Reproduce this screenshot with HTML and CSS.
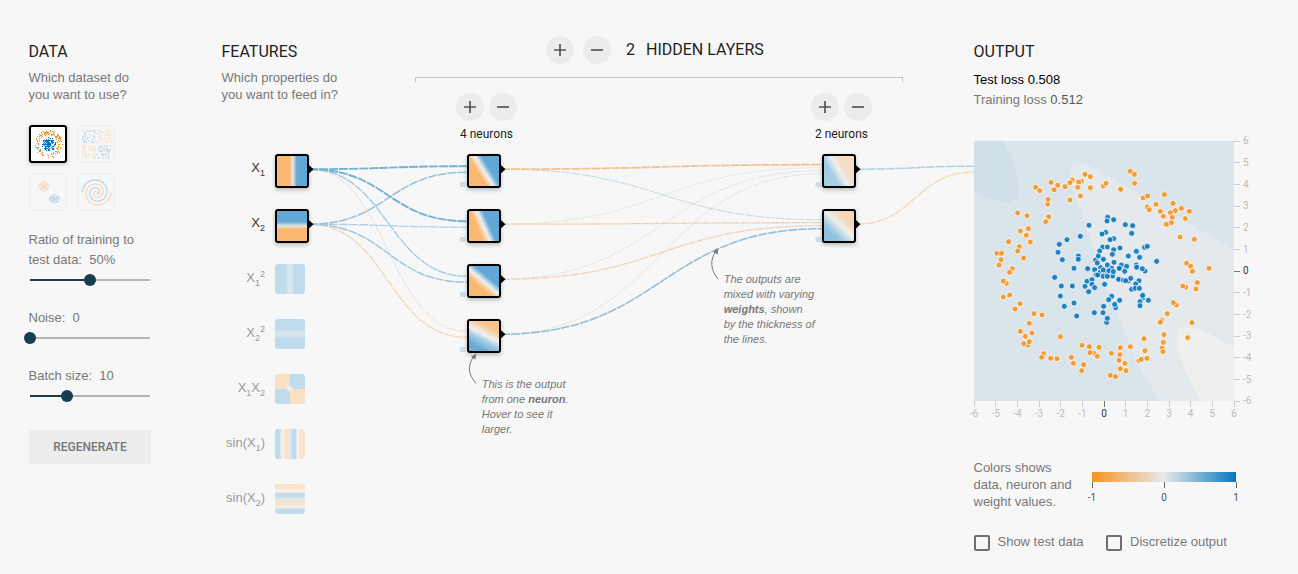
FILE: index.html
```html
<!DOCTYPE html>
<html lang="en">
<head>
<meta charset="utf-8">
<title>Neural network playground</title>
<link rel="stylesheet" href="styles.css">
</head>
<body>
<main class="page">
  <svg class="links" id="links" viewBox="0 0 1298 574"></svg>

  <section class="data">
    <h2>DATA</h2>
    <p class="intro">Which dataset do<br>you want to use?</p>
    <div class="datasets">
      <svg class="dataset selected" id="circle" viewBox="0 0 34 34"></svg>
      <svg class="dataset" id="xor" viewBox="0 0 34 34"></svg>
      <svg class="dataset" id="gauss" viewBox="0 0 34 34"></svg>
      <svg class="dataset" id="spiral" viewBox="0 0 34 34"></svg>
    </div>
    <div class="control ratio"><label>Ratio of training to<br>test data:&nbsp; 50%</label><div class="slider"><div class="fill" style="width:60px"></div></div></div>
    <div class="control"><label>Noise:&nbsp; 0</label><div class="slider"><div class="fill" style="width:0px"></div></div></div>
    <div class="control"><label>Batch size:&nbsp; 10</label><div class="slider"><div class="fill" style="width:37px"></div></div></div>
    <button class="regenerate">REGENERATE</button>
  </section>

  <section class="features">
    <h2>FEATURES</h2>
    <p class="intro">Which properties do<br>you want to feed in?</p>
    <div class="feature-list">
      <div class="feature on"><span>X<sub>1</sub></span><i class="tile node x1"></i></div>
      <div class="feature on"><span>X<sub>2</sub></span><i class="tile node x2"></i></div>
      <div class="feature"><span>X<sub>1</sub><sup>2</sup></span><i class="tile x1sq"></i></div>
      <div class="feature"><span>X<sub>2</sub><sup>2</sup></span><i class="tile x2sq"></i></div>
      <div class="feature"><span>X<sub>1</sub>X<sub>2</sub></span><i class="tile x1x2"></i></div>
      <div class="feature"><span>sin(X<sub>1</sub>)</span><i class="tile sin1"></i></div>
      <div class="feature"><span>sin(X<sub>2</sub>)</span><i class="tile sin2"></i></div>
    </div>
  </section>

  <section class="hidden-layers">
    <header class="layer-header">
      <button class="round"><svg viewBox="0 0 28 28"><path d="M8 14H20M14 8V20"/></svg></button>
      <button class="round"><svg viewBox="0 0 28 28"><path d="M8 14H20"/></svg></button>
      <span class="count">2</span><span>HIDDEN LAYERS</span>
    </header>
    <div class="bracket"></div>
    <div class="layers">
      <div class="layer">
        <div class="layer-buttons">
          <button class="round"><svg viewBox="0 0 28 28"><path d="M8 14H20M14 8V20"/></svg></button>
          <button class="round"><svg viewBox="0 0 28 28"><path d="M8 14H20"/></svg></button>
        </div>
        <div class="neuron-count">4 neurons</div>
        <div class="neurons">
          <i class="tile node h1"></i><i class="tile node h2"></i><i class="tile node h3"></i><i class="tile node h4"></i>
        </div>
      </div>
      <div class="layer">
        <div class="layer-buttons">
          <button class="round"><svg viewBox="0 0 28 28"><path d="M8 14H20M14 8V20"/></svg></button>
          <button class="round"><svg viewBox="0 0 28 28"><path d="M8 14H20"/></svg></button>
        </div>
        <div class="neuron-count">2 neurons</div>
        <div class="neurons">
          <i class="tile node o1"></i><i class="tile node o2"></i>
        </div>
      </div>
    </div>
    <div class="callout callout-neuron">This is the output<br>from one <b>neuron</b>.<br>Hover to see it<br>larger.</div>
    <div class="callout callout-weights">The outputs are<br>mixed with varying<br><b>weights</b>, shown<br>by the thickness of<br>the lines.</div>
  </section>

  <section class="output">
    <h2>OUTPUT</h2>
    <div class="loss test">Test loss <span>0.508</span></div>
    <div class="loss">Training loss <span>0.512</span></div>
    <svg class="heatmap" id="heatmap" viewBox="0 0 300 290">
      <rect width="260" height="260" fill="#dae5eb"/>
      <path fill="#d1dfe9" d="M0 0H29.3L37.7 15.7L42.7 34L45.3 49L43.7 57L35.3 62.5L22.7 60L9.3 55.7L0 50Z"/>
      <path fill="#e4e9ed" d="M97 25.7L99.3 21.7L109 22L126 30L159.3 49L192.7 70.7L226 89L260 109.7V260H185.3L164.3 224L144.3 175.7L132 147L121 112L97.7 42Z"/>
      <path fill="#eff0ee" d="M203.3 209V190.7L206 187.3L216 186.3L229.3 189.7L260 206.3V260H227L211 229Z"/>
      <g id="axes"></g>
      <g id="points"></g>
    </svg>
    <div class="legend">
      <p>Colors shows<br>data, neuron and<br>weight values.</p>
      <div class="scale">
        <div class="gradient"></div>
        <div class="marks"><span>-1</span><span>0</span><span>1</span></div>
      </div>
    </div>
    <div class="checks">
      <label><i class="box"></i>Show test data</label>
      <label><i class="box"></i>Discretize output</label>
    </div>
  </section>
</main>
<script src="app.js"></script>
</body>
</html>
```

FILE: styles.css
```css
* { box-sizing: border-box; }

body {
  margin: 0;
  background: #f7f7f7;
  color: #777;
  font: 13px/17px "Liberation Sans", Arial, sans-serif;
}

.page {
  position: relative;
  display: grid;
  grid-template-columns: 193px 194px 558px 1fr;
  width: 1298px;
  height: 574px;
  padding-left: 28.5px;
  overflow: hidden;
}

.links { position: absolute; left: 0; top: 0; width: 1298px; height: 574px; fill: none; }
.links .head { fill: #000; }
.links .bias { fill: #cfdfe9; }
.links .pointer { stroke: #777; stroke-width: 1; }
.links .pointer-head { fill: #777; }
.links path.link { stroke-dasharray: 9 1; }

h2 {
  margin: 0;
  padding-top: 42px;
  color: #1e1e1e;
  font: 400 16px/19px Roboto, sans-serif;
}

.intro { margin: 8px 0 0; }

/* Data column */
.datasets {
  display: grid;
  grid-template-columns: 38px 38px;
  gap: 10px;
  margin: 22px 0 0 .5px;
}
.dataset {
  width: 38px;
  height: 38px;
  border: 2px solid #f1f1f1;
  border-radius: 3px;
}
.dataset.selected {
  border-color: #000;
  background: #fff;
  box-shadow: 0 1px 4px rgba(0, 0, 0, .25);
}

.control { height: 58px; }
.control label { display: block; line-height: 20px; }
.control.ratio { height: 78px; margin-top: 19px; }
.slider {
  width: 120px;
  height: 2px;
  margin: 9px 0 0 1.5px;
  background: #b5b5b5;
}
.fill { position: relative; height: 2px; background: #183d4e; }
.fill::after {
  content: "";
  position: absolute;
  right: -6px;
  top: -5px;
  width: 12px;
  height: 12px;
  border-radius: 50%;
  background: #183d4e;
}
.regenerate {
  display: block;
  width: 122px;
  height: 34px;
  margin: 6px 0 0 .5px;
  padding: 0;
  border: 0;
  border-radius: 2px;
  background: #ededed;
  color: #757575;
  font: 500 12px/34px Roboto, sans-serif;
}

/* Tiles and nodes */
.tile {
  position: relative;
  display: block;
  width: 30px;
  height: 30px;
  border-radius: 3px;
}
.node {
  width: 34px;
  height: 34px;
  border: 2px solid #000;
  background-clip: padding-box;
  background-origin: padding-box;
  box-shadow: 0 2px 4px rgba(0, 0, 0, .25);
}
.x1 { background-image: linear-gradient(90deg, #fab971 41%, #e8e6e0 53%, #62a8d6 66%); }
.x2 { background-image: linear-gradient(180deg, #62a8d6 36%, #e8e6e0 50%, #fab971 60%); }
.x1sq { background: linear-gradient(90deg, #bfdbec 36%, #d7e5ef 43%, #d7e5ef 57%, #bfdbec 63%); }
.x2sq { background: linear-gradient(180deg, #bfdbec 36%, #d7e5ef 43%, #d7e5ef 57%, #bfdbec 63%); }
.x1x2 {
  background:
    radial-gradient(circle at 50% 50%, #edf0f0 0, #edf0f0 6%, transparent 19%),
    conic-gradient(#bfdbec 25%, #fae0c3 0 50%, #bfdbec 0 75%, #fae0c3 0);
}
.sin1 { background: linear-gradient(90deg, #bfdbec 14%, #f4f2ef 24%, #fae2cb 34%, #fae2cb 42%, #dde8ef 50%, #bfdbec 61%, #bfdbec 69%, #f7f5f2 75%, #fae2cb 84%); }
.sin2 { background: linear-gradient(180deg, #fae2cb 14%, #f7f5f2 25%, #bfdbec 33%, #bfdbec 40%, #dde8ef 50%, #fae2cb 60%, #fae2cb 70%, #f7f5f2 77%, #c3dcec 84%); }
.h1 { background-image: linear-gradient(58deg, #fab971 36%, #eef0f1 50%, #62a8d6 64%); }
.h2 { background-image: linear-gradient(66deg, #fab971 34%, #eef0f1 49%, #62a8d6 63%); }
.h3 { background-image: linear-gradient(40deg, #fab971 34%, #eef0f1 49%, #62a8d6 63%); }
.h4 { background-image: linear-gradient(28deg, #68acd6 20%, #a8cde4 40%, #eef0f1 53%, #fac58b 76%); }
.o1 { background-image: linear-gradient(60deg, #a5cce3 32%, #eef0f1 51%, #f3dfc9 61%); }
.o2 { background-image: linear-gradient(43deg, #8fc1e0 25%, #b3d2e5 37%, #eef0f1 53%, #f6d6b4 72%); }

/* Features column */
.feature-list { margin-top: 51px; }
.feature {
  display: flex;
  gap: 10px;
  height: 55px;
  color: #999;
}
.feature.on { color: #333; }
.feature span { width: 43.5px; text-align: right; line-height: 28px; white-space: nowrap; }
.feature sub, .feature sup { font-size: 9px; line-height: 0; }
.feature sub { vertical-align: -4px; }
.feature sup { vertical-align: 5px; }

/* Hidden layers */
.hidden-layers { position: relative; color: #1e1e1e; }
.layer-header {
  display: flex;
  gap: 9px;
  align-items: center;
  height: 28px;
  margin: 36px 0 0 130.5px;
  font: 400 16px/28px Roboto, sans-serif;
}
.count { margin: 0 2px 0 6px; }
.round {
  width: 28px;
  height: 28px;
  padding: 0;
  border: 0;
  border-radius: 50%;
  background: #ececec;
}
.round svg { display: block; width: 28px; height: 28px; stroke: #555; stroke-width: 1.7; }
.bracket {
  width: 488px;
  height: 5px;
  margin: 13px 0 0 -.5px;
  border: solid #c4c4c4;
  border-width: 1px 1px 0;
}
.layers { display: flex; gap: 294px; padding: 11px 0 0 40.5px; }
.layer { width: 61px; }
.layer-buttons { display: flex; gap: 5px; }
.neuron-count { margin-top: 5px; text-align: center; font: 12px/17px Roboto, sans-serif; white-space: nowrap; }
.neurons { display: grid; gap: 21px; margin: 11px 0 0 11px; }
.callout { position: absolute; color: #777; font-size: 11px; line-height: 15px; font-style: italic; white-space: nowrap; }
.callout-neuron { left: 66.2px; top: 377px; }
.callout-weights { left: 308.2px; top: 272px; }

/* Output column */
.output { position: relative; }
.loss { line-height: 20px; }
.loss span { color: #555; }
.loss.test, .loss.test span { color: #000; }
.loss.test { margin-top: 9px; }
.heatmap { display: block; width: 300px; height: 290px; margin: 31px 0 0 .5px; overflow: visible; }
.heatmap text { font: 10px Roboto, sans-serif; fill: #bbb; }
.heatmap text.zero { fill: #333; }
.legend { display: flex; margin-top: 28px; }
.legend p { width: 118.5px; margin: 0; }
.scale { width: 144px; padding-top: 13px; }
.gradient { height: 10px; background: linear-gradient(90deg, #f59322, #e8eaeb 50%, #0877bd); }
.marks { display: flex; justify-content: space-between; margin: 0 -10px; font: 10px/12px Roboto, sans-serif; color: #555; }
.marks span { width: 20px; text-align: center; }
.marks span::before { content: ""; display: block; width: 1px; height: 6px; margin: 0 auto 4px; background: #666; }
.checks { display: flex; gap: 22.8px; margin: 23px 0 0 .2px; line-height: 18px; }
.checks label { display: flex; gap: 7.8px; }
.box { width: 16px; height: 16px; margin-top: 2px; border: 2px solid #707070; border-radius: 2px; }
```

FILE: app.js
```javascript
const NS = "http://www.w3.org/2000/svg";
const BLUE = "#0877bd";
const ORANGE = "#f59322";

function add(parent, name, attrs, text) {
  const el = document.createElementNS(NS, name);
  for (const key in attrs) el.setAttribute(key, attrs[key]);
  if (text !== undefined) el.textContent = text;
  parent.appendChild(el);
  return el;
}

/* Weighted links: [x1, y1, x2, y2, width, colour] */
const links = document.getElementById("links");
const rows = [169.2, 224.2, 279.2, 334.2];
const weights = [
  [309, rows[0], 467, rows[3] - 3, 1, "#f0dfcb"],
  [309, rows[1], 467, rows[3] + 3, 1.2, "#f0d4b2"],
  [309, rows[0], 467, rows[2] - 3, 1.3, "#9fc9e2"],
  [309, rows[1], 467, rows[2] + 3, 1.4, "#97c4e0"],
  [309, rows[1], 467, rows[1] + 3, 1.3, "#b0d1e4"],
  [309, rows[1], 467, rows[0] + 3, 1.5, "#93c1de"],
  [309, rows[0], 467, rows[1] - 3, 1.9, "#76b1d8"],
  [309, rows[0], 467, rows[0] - 3, 1.9, "#76b1d8"],
  [501, rows[1], 822, rows[0] - 1.5, .8, "#e2e3e0"],
  [501, rows[2], 822, rows[0] + 1.5, .9, "#e3e1db"],
  [501, rows[3], 822, rows[0] + 4.5, .9, "#e6e1d6"],
  [501, rows[0], 822, rows[1] - 4.5, 1.1, "#cbdce7"],
  [501, rows[1], 822, rows[1] - 1.5, 1.3, "#f0d1ad"],
  [501, rows[2], 822, rows[1] + 1.5, 1.3, "#f0d4b4"],
  [501, rows[3], 822, rows[1] + 4.5, 1.6, "#91bfde"],
  [501, rows[0], 822, rows[0] - 4.5, 1.8, "#f3c38e"],
  [856, rows[0], 974, 166.2, 1.5, "#aed0e5"],
  [856, rows[1], 974, 172.2, 1.3, "#f0d7bb"]
];
for (const [x1, y1, x2, y2, width, stroke] of weights) {
  const mid = (x1 + x2) / 2;
  add(links, "path", { class: "link", stroke, "stroke-width": width,
    d: `M${x1} ${y1}C${mid} ${y1} ${mid} ${y2} ${x2} ${y2}` });
}
const outlets = [[309, 0], [309, 1], [501, 0], [501, 1], [501, 2], [501, 3], [856, 0], [856, 1]];
for (const [x, r] of outlets) {
  add(links, "path", { class: "head", d: `M${x - 1} ${rows[r] - 5}L${x + 4.5} ${rows[r]}L${x - 1} ${rows[r] + 5}Z` });
  if (x > 309) add(links, "rect", { class: "bias", x: x === 501 ? 460 : 815.5, y: 182 + r * 55, width: 5.5, height: 5 });
}
add(links, "path", { class: "pointer", d: "M476 383.5C468 374 467 366 474 356" });
add(links, "path", { class: "pointer-head", d: "M476 354L475.5 359.5L471 356.8Z" });
add(links, "path", { class: "pointer", d: "M718 279C710 269 710 260 716 251" });
add(links, "path", { class: "pointer-head", d: "M718 248L717.8 254.5L713.3 251.8Z" });

/* Axes, six units either side of zero */
const axes = document.getElementById("axes");
for (let v = -6; v <= 6; v++) {
  const p = (v + 6) * 260 / 12;
  const tick = v === 0 ? "#777" : "#ccc";
  const cls = v === 0 ? "zero" : "";
  add(axes, "path", { stroke: tick, d: `M${Math.floor(p) + .5} 260V266M260 ${Math.floor(260 - p) + .5}H266` });
  add(axes, "text", { class: cls, x: p, y: 276, "text-anchor": "middle" }, v);
  add(axes, "text", { class: cls, x: 269, y: 263.3 - p }, v);
}

/* Samples per quadrant, in thirds of a pixel from the quadrant's origin */
const quadrants = [
  { x: -4, y: -6,
    orange: [345,118,361,125,307,135,334,138,326,141,300,143,243,142,263,151,252,164,285,155,197,157,209,167,323,157,361,158,400,153,408,145,450,163,331,183,300,195,233,207,234,193,143,234,171,242,236,245,227,260,175,281,151,288,169,301,181,321,116,320,148,335,143,348,161,369,81,355,95,355,93,374,87,390,127,401,119,412,109,445,100,438],
    blue: [413,247,411,258,431,254,357,271,407,292,396,297,331,304,291,314,431,311,420,314,268,328,264,352,277,374,325,363,325,373,312,400,254,427,398,336,412,336,389,348,431,344,427,358,377,375,385,363,400,373,382,384,353,401,432,382,412,390,392,398,425,400,390,412,408,414,374,404,400,405,417,407,378,419,383,420,400,424,428,423,412,424,430,410,351,439,366,434,366,448,404,448,447,433,448,400] },
  { x: 126, y: -6,
    orange: [91,109,103,118,104,145,62,163,129,189,143,183,193,179,142,216,148,224,168,208,219,205,181,229,190,244,226,227,211,233,244,220,268,229,217,247,214,263,199,268,256,251,240,306,283,313,260,385,272,394,277,409,327,400,292,443],
    blue: [60,339,76,269,98,272,95,295,134,337,142,334,109,349,85,363,119,367,170,379,109,390,110,397,135,408,127,401,64,390,80,394,58,400,74,409,85,438,92,430,117,437,56,433,70,436,77,437,107,447] },
  { x: -4, y: 129,
    orange: [119,75,100,81,150,101,135,117,192,131,216,135,178,160,151,184,186,189,166,199,174,225,178,215,161,221,221,251,215,262,242,265,261,266,271,200,304,262,310,280,341,284,335,302,336,226,358,230,387,232,372,250,360,248,382,259,424,250,421,316,436,320],
    blue: [274,48,307,48,271,78,312,99,283,109,320,138,345,49,374,53,356,65,373,128,399,128,401,109,425,79,416,89,437,113,434,103,449,91,410,157,412,145] },
  { x: 126, y: 129,
    orange: [257,52,248,48,288,57,229,105,220,98,202,131,185,151,181,157,276,158,263,203,192,194,190,217,186,235,189,245,132,206,135,242,91,230,61,233,60,254,57,271,75,280,61,296,78,302,117,272,124,268,141,265],
    blue: [95,58,106,55,118,55,128,84,128,76,145,91,120,95,120,107] }
];
const points = document.getElementById("points");
for (const q of quadrants) {
  for (const kind of ["orange", "blue"]) {
    for (let i = 0; i < q[kind].length; i += 2) {
      add(points, "circle", { cx: q[kind][i] / 3 + q.x, cy: q[kind][i + 1] / 3 + q.y, r: 3,
        fill: kind === "orange" ? ORANGE : BLUE, "fill-opacity": .9, stroke: "#fff", "stroke-width": .8 });
    }
  }
}

/* Dataset thumbnails */
let seed = 7;
function random() {
  seed = (seed * 16807) % 2147483647;
  return seed / 2147483647;
}
function pixel(id, x, y, fill) {
  add(document.getElementById(id), "rect", { x: Math.round(x), y: Math.round(y), width: 1.1, height: 1.1, fill });
}
const PALE_BLUE = "#c5dcea";
const PALE_ORANGE = "#f7e0c9";
for (let i = 0; i < 135; i++) {
  const a = random() * Math.PI * 2;
  const r = 9.5 + random() * 4.5;
  pixel("circle", 17 + r * Math.cos(a), 17 + r * Math.sin(a), ORANGE);
  const b = random() * Math.PI * 2;
  const s = random() * 7;
  pixel("circle", 17 + s * Math.cos(b), 17 + s * Math.sin(b), BLUE);
}
for (let i = 0; i < 330; i++) {
  const x = random() * 29 - 14.5;
  const y = random() * 29 - 14.5;
  if (Math.abs(x) > 1 && Math.abs(y) > 1) pixel("xor", 17 + x, 17 + y, x * y > 0 ? PALE_BLUE : PALE_ORANGE);
}
for (let i = 0; i < 150; i++) {
  const a = random() * Math.PI * 2;
  const r = random() * 5.5;
  pixel("gauss", 12 + r * Math.cos(a), 11 + r * Math.sin(a), PALE_ORANGE);
  pixel("gauss", 23 + r * Math.sin(a), 23 + r * .8 * Math.cos(a), PALE_BLUE);
}
/* Two arms, each winding clockwise inwards from its outer end */
for (const [end, stroke] of [[Math.PI, "#c0daea"], [0, "#f8dcc0"]]) {
  let d = "";
  for (let t = 0; t <= 1.001; t += .02) {
    const a = end - (1 - t) * Math.PI * 3.4;
    const r = 1 + 13.5 * t;
    d += `${d ? "L" : "M"}${(17.5 + r * Math.cos(a)).toFixed(2)} ${(17.5 - r * Math.sin(a)).toFixed(2)}`;
  }
  add(document.getElementById("spiral"), "path", { d, stroke, fill: "none", "stroke-width": 1.5 });
}
```
